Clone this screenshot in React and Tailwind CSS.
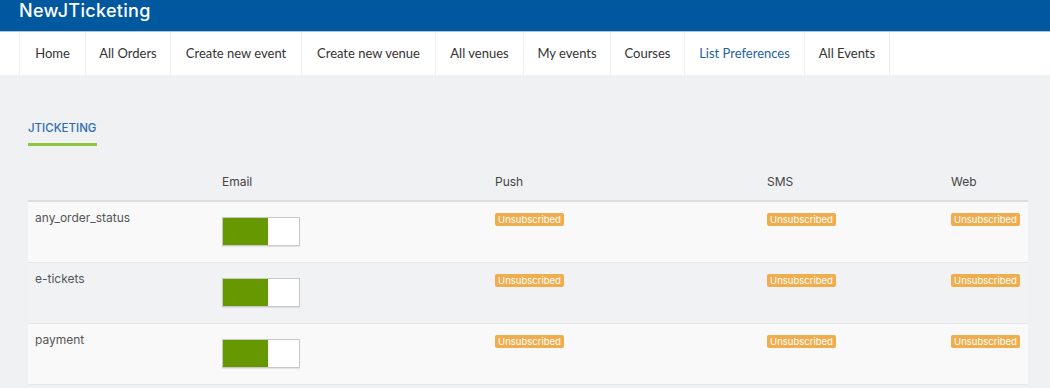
export default function App() {
  const nav = [
    "Home",
    "All Orders",
    "Create new event",
    "Create new venue",
    "All venues",
    "My events",
    "Courses",
    "List Preferences",
    "All Events",
  ];
  const navW = {
    "Home": "w-[66px]",
    "All Orders": "w-[85px]",
    "Create new event": "w-[131px]",
    "Create new venue": "w-[134px]",
    "All venues": "w-[88px]",
    "My events": "w-[87px]",
    "Courses": "w-[74px]",
    "List Preferences": "w-[120px]",
    "All Events": "w-[85px]",
  };
  const rows = ["any_order_status", "e-tickets", "payment"];
  const badge = (
    <div className="pt-[11px]">
      <span className="block w-[69px] rounded-[2px] bg-[#f0ad4e] text-center text-[9.5px] leading-[13px] text-white">
        Unsubscribed
      </span>
    </div>
  );
  return (
    <div className="min-h-[388px] w-[1050px] bg-[#f0f1f3]" style={{ fontFamily: "Lato, 'Open Sans', sans-serif" }}>
      <div className="h-[32px] border-b border-[#a9c4dc] bg-[#00589f] pl-[19px]">
        <div className="text-[18px] leading-[22px] font-medium tracking-[0.3px] text-white" style={{ fontFamily: "Inter, sans-serif" }}>
          NewJTicketing
        </div>
      </div>
      <div className="flex h-[43px] bg-white pl-[19px]">
        {nav.map((n) => (
          <div
            key={n}
            className={`flex h-full items-center justify-center border-l border-[#eeeeee] text-[13px] ${navW[n]} ${n === "List Preferences" ? "text-[#245fa0]" : "text-[#333]"}`}
          >
            {n}
          </div>
        ))}
        <div className="h-full border-l border-[#eeeeee]" />
      </div>
      <div className="px-[28px] pt-[46px]">
        <div className="w-[69px] border-b-[3px] border-[#8dc63f] pb-[8px] text-[11.5px] leading-[14px] font-medium whitespace-nowrap text-[#2f6db0]" style={{ fontFamily: "Inter, sans-serif" }}>
          JTICKETING
        </div>
        <div className="mt-[28px] w-[1000px] text-[12px] text-[#444]" style={{ fontFamily: "Inter, sans-serif" }}>
          <div className="grid h-[28px] grid-cols-[194px_273px_272px_184px_77px] border-b-2 border-[#dddddd] leading-[16px] text-[#444]">
            <div />
            <div>Email</div>
            <div>Push</div>
            <div>SMS</div>
            <div>Web</div>
          </div>
          {rows.map((r, i) => (
            <div
              key={r}
              className={`grid h-[61px] grid-cols-[194px_273px_272px_184px_77px] border-b border-[#e6e6e6] ${i % 2 === 0 ? "bg-[#f9f9f9]" : "bg-[#f1f2f4]"}`}
            >
              <div className="pt-[8px] pl-[7px] leading-[16px] text-[#555]">{r}</div>
              <div className="pt-[15px]">
                <div className="flex h-[29px] w-[78px] border border-[#c8c8c8] shadow-[0_1px_1px_rgba(0,0,0,0.08)]">
                  <div className="h-full w-[45px] bg-[#669900]" />
                  <div className="h-full flex-1 bg-white" />
                </div>
              </div>
              {badge}
              {badge}
              {badge}
            </div>
          ))}
        </div>
      </div>
    </div>
  );
}
